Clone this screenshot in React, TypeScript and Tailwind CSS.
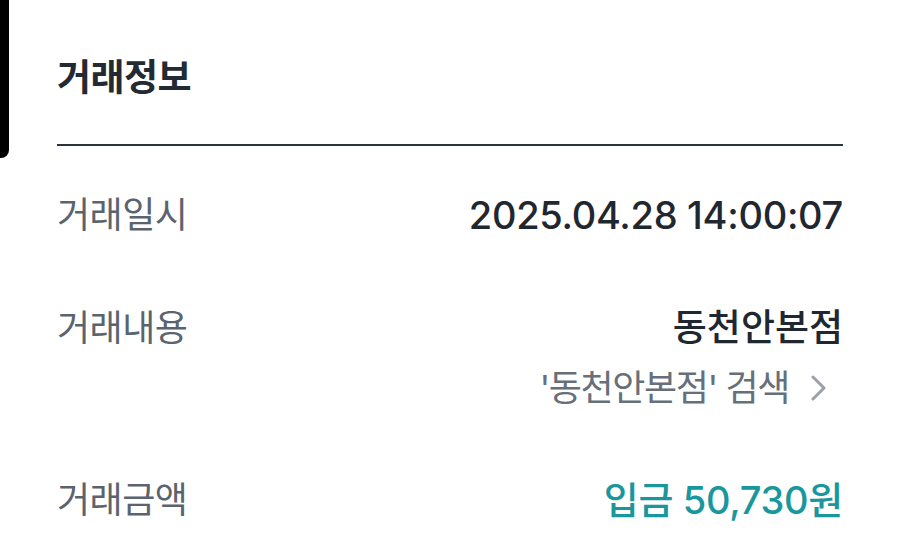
const FONT = { fontFamily: 'Inter, "Noto Sans CJK KR", sans-serif' };

function Row({ label, children }: { label: string; children: React.ReactNode }) {
  return (
    <div className="flex items-start justify-between">
      <span className="text-[36px] leading-[44px] tracking-[-0.5px] text-[#5b646e]">{label}</span>
      <div className="flex flex-col items-end">{children}</div>
    </div>
  );
}

export default function App() {
  return (
    <div className="relative h-[558px] w-[899px] overflow-hidden bg-white" style={FONT}>
      <div className="absolute left-0 top-0 h-[158px] w-[9px] rounded-br-[8px] bg-black" />
      <div className="pl-[57px] pr-[56px]">
        <h1 className="mt-[56px] text-[37px] font-bold leading-[44px] tracking-[-0.5px] text-[#222a33]">거래정보</h1>
        <div className="mt-[44px] h-[2px] bg-[#2b333c]" />

        <div className="mt-[47px]">
          <Row label="거래일시">
            <span className="text-[38px] font-medium leading-[44px] tracking-[-0.3px] text-[#1f2731]">
              2025.04.28 14:00:07
            </span>
          </Row>
        </div>

        <div className="mt-[69px]">
          <Row label="거래내용">
            <span className="text-[37px] font-medium leading-[44px] tracking-[0px] text-[#1f2731]">동천안본점</span>
            <button className="mt-[16px] flex items-center gap-[22px] text-[36px] leading-[44px] tracking-[-1.4px] text-[#66707a]">
              <span>'동천안본점' 검색</span>
              <svg width="16" height="26" viewBox="0 0 16 26" fill="none" className="mr-[16px]">
                <path d="M2 2 L13 13 L2 24" stroke="#9aa1a8" strokeWidth="3" strokeLinecap="round" strokeLinejoin="round" />
              </svg>
            </button>
          </Row>
        </div>

        <div className="mt-[68px]">
          <Row label="거래금액">
            <span className="text-[38px] font-medium leading-[44px] tracking-[-0.3px] text-[#1a979d]">입금 50,730원</span>
          </Row>
        </div>
      </div>
    </div>
  );
}
